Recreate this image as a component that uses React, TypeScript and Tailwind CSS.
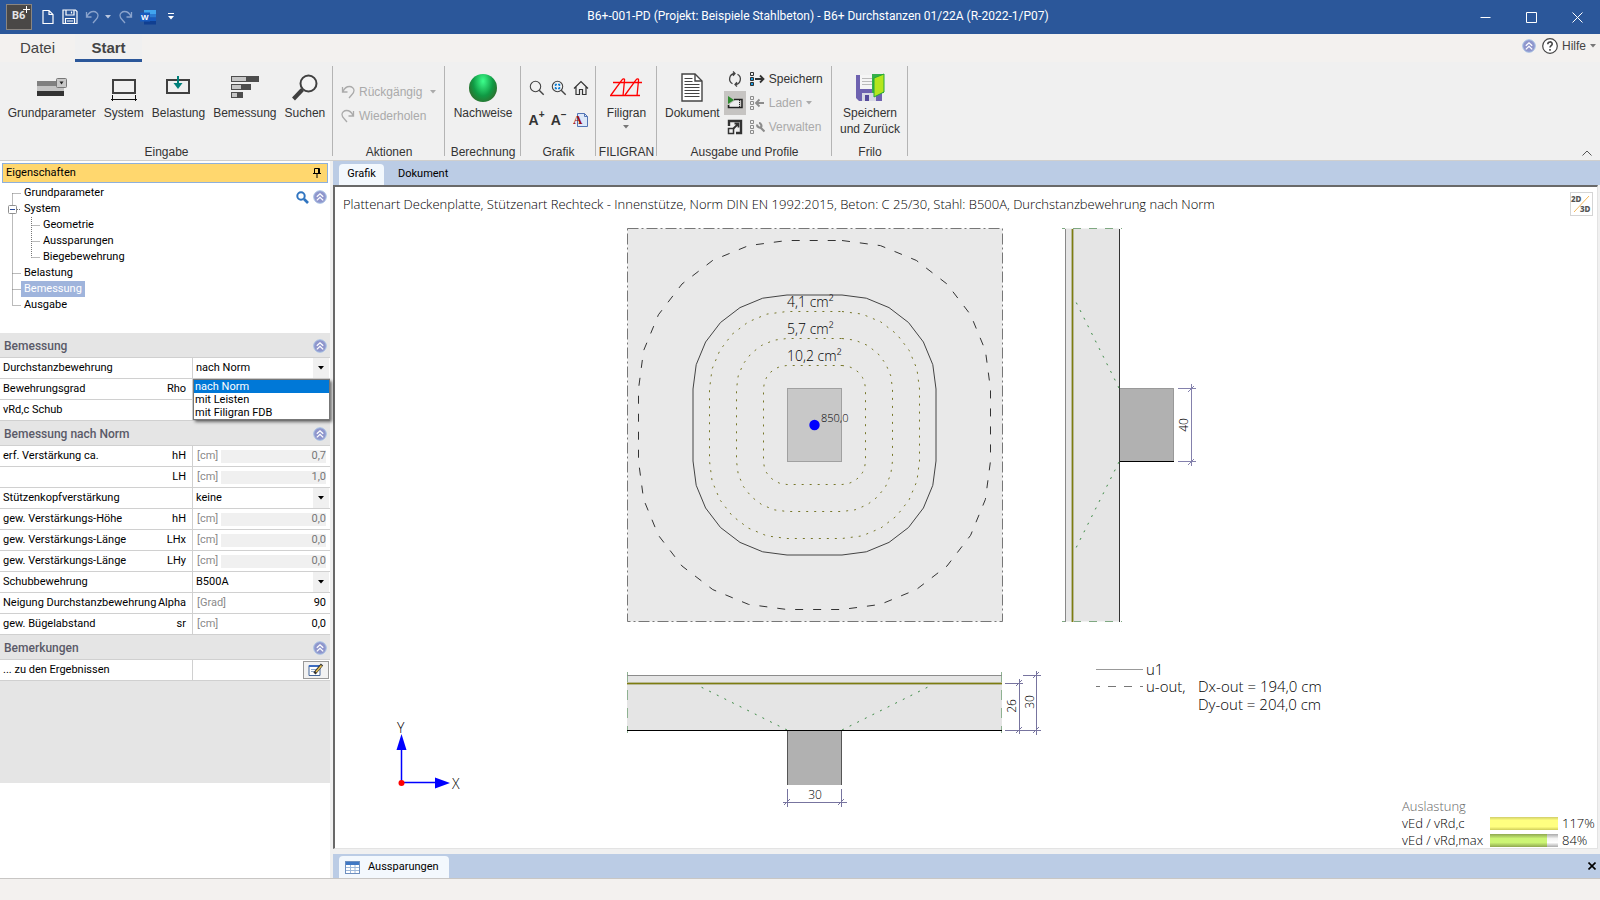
import { useState } from 'react';
import type { ReactNode } from 'react';

type PropertyRow = {
  id: string;
  label: string;
  symbol?: string;
  unit?: string;
  value?: string;
  options?: string[];
  locked?: boolean;
};

const normRows: PropertyRow[] = [
  { id: 'hh-erf', label: 'erf. Verstärkung ca.', symbol: 'hH', unit: '[cm]', value: '0,7', locked: true },
  { id: 'lh-erf', label: '', symbol: 'LH', unit: '[cm]', value: '1,0', locked: true },
  { id: 'kopf', label: 'Stützenkopfverstärkung', value: 'keine', options: ['keine'] },
  { id: 'hh', label: 'gew. Verstärkungs-Höhe', symbol: 'hH', unit: '[cm]', value: '0,0', locked: true },
  { id: 'lhx', label: 'gew. Verstärkungs-Länge', symbol: 'LHx', unit: '[cm]', value: '0,0', locked: true },
  { id: 'lhy', label: 'gew. Verstärkungs-Länge', symbol: 'LHy', unit: '[cm]', value: '0,0', locked: true },
  { id: 'schub', label: 'Schubbewehrung', value: 'B500A', options: ['B500A'] },
  { id: 'alpha', label: 'Neigung Durchstanzbewehrung', symbol: 'Alpha', unit: '[Grad]', value: '90' },
  { id: 'sr', label: 'gew. Bügelabstand', symbol: 'sr', unit: '[cm]', value: '0,0' },
];

const reinforcementOptions = ['nach Norm', 'mit Leisten', 'mit Filigran FDB'];

const treeItems = [
  { name: 'Grundparameter', level: 0 },
  { name: 'System', level: 0 },
  { name: 'Geometrie', level: 1 },
  { name: 'Aussparungen', level: 1 },
  { name: 'Biegebewehrung', level: 1 },
  { name: 'Belastung', level: 0 },
  { name: 'Bemessung', level: 0 },
  { name: 'Ausgabe', level: 0 },
];

/* ---------- Icons ---------- */

function RoundChevron() {
  return (
    <svg width="14" height="14" viewBox="0 0 14 14" fill="none">
      <circle cx="7" cy="7" r="6.3" fill="#8f96cc" stroke="#a9c3e6" strokeWidth="1" />
      <path d="M3.8 6.8 7 3.8l3.2 3M3.8 10.4 7 7.4l3.2 3" stroke="#fff" strokeWidth="1.3" />
    </svg>
  );
}

function Caret({ className = 'text-[#777]' }: { className?: string }) {
  return (
    <svg width="6" height="4" viewBox="0 0 6 4" className={className}>
      <path d="M0 0h6L3 3.5z" fill="currentColor" />
    </svg>
  );
}

function UndoIcon({ flip = false }: { flip?: boolean }) {
  return (
    <svg width="14" height="14" viewBox="0 0 14 14" fill="none" stroke="currentColor" strokeWidth="1.3">
      {flip ? (
        <path d="M12.5 2v5h-5M12 6.5C10.5 3 8 1.500 5.500 1.500 3 1.500 1 3.500 1 5.500c0 2 1 3 2 4L6 13" />
      ) : (
        <path d="M1.500 2v5h5M2 6.500C3.500 3 6 1.500 8.500 1.500c2.500 0 4.500 2 4.500 4 0 2-1 3-2 4L8 13" />
      )}
    </svg>
  );
}

function ParameterIcon() {
  return (
    <svg width="32" height="28" viewBox="0 0 32 28">
      <rect x="1" y="7" width="20" height="5" fill="#808080" />
      <rect x="1" y="12" width="27" height="5" fill="#c3c3c3" />
      <rect x="1" y="17" width="27" height="5" fill="#333" />
      <rect x="20.500" y="4.500" width="10" height="9" rx="1" fill="#c8c8c8" stroke="#777" />
      <path d="M23.500 7.500h4l-2 3z" fill="#222" />
    </svg>
  );
}

function SystemIcon() {
  return (
    <svg width="30" height="28" viewBox="0 0 30 28" fill="none" stroke="#404040">
      <rect x="4" y="6" width="22" height="13" strokeWidth="2" />
      <path d="M2 25.500h26M3.500 21v6M26.500 21v6" stroke="#111" strokeWidth="1" />
    </svg>
  );
}

function LoadIcon() {
  return (
    <svg width="28" height="28" viewBox="0 0 28 28" fill="none">
      <rect x="3" y="6" width="22" height="13" stroke="#404040" strokeWidth="2" />
      <path d="M14 2v8" stroke="#00807a" strokeWidth="2" />
      <path d="M9.500 9h9L14 15z" fill="#00807a" />
    </svg>
  );
}

function DesignIcon() {
  return (
    <svg width="30" height="28" viewBox="0 0 30 28">
      <path d="M1 2h28v6H1zM1 10h20v6H1zM1 18h12v6H1z" fill="#4d4d4d" />
      <path d="M2 3h14v4H2zM2 11h9v4H2zM2 19h5v4H2z" fill="#c6c6c6" />
    </svg>
  );
}

function MagnifierIcon() {
  return (
    <svg width="28" height="28" viewBox="0 0 28 28" fill="none" stroke="#404040">
      <circle cx="17.500" cy="9.500" r="8" strokeWidth="2" fill="#f4f4f4" />
      <path d="M11.500 15.500 2.500 25" strokeWidth="4" />
    </svg>
  );
}

function ZoomIcon({ windowed = false }: { windowed?: boolean }) {
  return (
    <svg width="16" height="16" viewBox="0 0 16 16" fill="none" stroke="#444">
      <circle cx="6.500" cy="6.500" r="5.200" strokeWidth="1.100" />
      <path d="m10.200 10.200 4.500 4.500" strokeWidth="1.400" />
      {windowed && <path d="M4.500 6V4.500H6M7 4.500h1.500V6M8.500 7v1.500H7M6 8.500H4.500V7" stroke="#1382d8" strokeWidth="1.400" />}
    </svg>
  );
}

function HomeIcon() {
  return (
    <svg width="16" height="16" viewBox="0 0 16 16" fill="none" stroke="#333" strokeWidth="1.200">
      <path d="M1 8.500 8 1.500l7 7M3 7v7.500h3.500V9.500h3v5H13V7" />
    </svg>
  );
}

function FontPageIcon() {
  return (
    <svg width="16" height="16" viewBox="0 0 16 16">
      <path d="M4.500 1.500h7l3 3v10h-10z" fill="#dce8f8" stroke="#5274b5" />
      <path d="M11.500 1.500v3h3" fill="none" stroke="#5274b5" />
      <text x="0" y="12" fontFamily="Liberation Serif" fontSize="13" fontWeight="700" fill="#9c0d0d">A</text>
    </svg>
  );
}

function TrussIcon() {
  return (
    <svg width="32" height="22" viewBox="0 0 32 22" fill="none" stroke="#f00" strokeWidth="1.300">
      <path d="M3 5.500h29M0 18.500h30" />
      <path d="M1 18 12 3c1-1.500 3-1.500 2.500.500L13 19M15 18 26 3c1-1.500 3-1.500 2.500.500L27 19" />
    </svg>
  );
}

function DocumentIcon() {
  return (
    <svg width="22" height="30" viewBox="0 0 22 30" fill="none" stroke="#444">
      <path d="M1 1h13l7 7v20H1z" fill="#fff" strokeWidth="1.400" />
      <path d="M14 1v7h7" strokeWidth="1.400" />
      <path d="M3.500 5.500h8M3.500 8.500h8M3.500 11.500h15M3.500 14.500h15M3.500 17.500h15M3.500 20.500h15M3.500 23.500h15" />
    </svg>
  );
}

function RefreshIcon() {
  return (
    <svg width="16" height="16" viewBox="0 0 16 16" fill="none" stroke="#444" strokeWidth="1.300">
      <path d="M5.500 12.800A5.500 5.500 0 0 1 7.500 2.500M10.500 3.200A5.500 5.500 0 0 1 8.500 13.500M6 .5l2 2-2 2.300M10 11.200l-2 2.300 2 2" />
    </svg>
  );
}

function PreviewIcon() {
  return (
    <svg width="16" height="16" viewBox="0 0 16 16">
      <path d="M7 4.500h8v8H1.500V10" fill="none" stroke="#222" strokeWidth="1.500" />
      <path d="M8 5.500h4v6H3V9z" fill="#eee" />
      <path d="M12.500 5v7" stroke="#222" strokeDasharray="1 1" />
      <path d="M1 1v8l6-4z" fill="#2e8b2e" />
    </svg>
  );
}

function ExpandIcon() {
  return (
    <svg width="16" height="16" viewBox="0 0 16 16" fill="none" stroke="#333">
      <path d="M2 7V2h12v12H9" strokeWidth="2.400" />
      <path d="M1.500 9.500h5v5h-5z" strokeWidth="1.500" />
      <path d="m6.500 9.500 5-5M7.500 4.500h4v4" strokeWidth="1.800" />
    </svg>
  );
}

function ProfileIcon({ kind }: { kind: 'save' | 'load' | 'manage' }) {
  const tint = kind === 'save' ? '#333' : '#8c8c8c';
  return (
    <svg width="15" height="16" viewBox="0 0 15 16" fill="none" stroke={tint}>
      <path d="M.5 1.500h3v3h-3z" />
      <path d="M.5 6.500h3v3h-3zM.5 11.500h3v3h-3z" fill={kind === 'save' ? '#1c9be0' : 'none'} />
      {kind === 'save' && <path d="M5 8h8M10 4.500 13.500 8 10 11.500" strokeWidth="1.800" />}
      {kind === 'load' && <path d="M6 8h8M9.500 4.500 6 8l3.500 3.500" strokeWidth="1.800" />}
      {kind === 'manage' && <path d="M7 5.500c0 3 3 3.500 4 2.500s0-4-2-4M10.500 8.500l4 4" strokeWidth="2.200" />}
    </svg>
  );
}

function SaveExitIcon() {
  return (
    <svg width="30" height="30" viewBox="0 0 30 30">
      <path d="M1 2h26v26H4l-3-3z" fill="#6e62b0" />
      <path d="M5 2h16v14H5z" fill="#f5f5f5" />
      <path d="M7 5.500h10M7 8.500h10M7 11.500h10" stroke="#bbb" />
      <path d="M7 20h14v8H7z" fill="#d8d8e4" />
      <path d="M10 22h4v6h-4z" fill="#55499a" />
      <path d="M17 1h12v19H17z" fill="#35b04a" />
      <path d="M19 5 29 1v18l-10 5z" fill="#b5e61d" stroke="#22a83a" />
    </svg>
  );
}

/* ---------- Ribbon ---------- */

function RibbonGroup({ title, width, children }: { title: string; width: string; children: ReactNode }) {
  return (
    <section className={`relative flex shrink-0 flex-col items-center justify-between pt-[5px] ${width}`}>
      <div className="flex w-full justify-center">{children}</div>
      <h2 className="whitespace-nowrap leading-4">{title}</h2>
      <span className="absolute top-1 right-0 bottom-1 w-px bg-[#b4b4b4]" />
    </section>
  );
}

function BigButton({ icon, children }: { icon: ReactNode; children: ReactNode }) {
  return (
    <button className="flex flex-col items-center leading-4 whitespace-nowrap">
      <span className="flex h-[38px] items-center pt-1">{icon}</span>
      {children}
    </button>
  );
}

function Ribbon() {
  return (
    <div className="flex h-[99px] border-b border-[#d0cfcd] bg-[#f0f0f0] text-[12px] text-[#333]">
      <RibbonGroup title="Eingabe" width="w-[333px]">
        <div className="flex gap-2">
          <BigButton icon={<ParameterIcon />}>Grundparameter</BigButton>
          <BigButton icon={<SystemIcon />}>System</BigButton>
          <BigButton icon={<LoadIcon />}>Belastung</BigButton>
          <BigButton icon={<DesignIcon />}>Bemessung</BigButton>
          <BigButton icon={<MagnifierIcon />}>Suchen</BigButton>
        </div>
      </RibbonGroup>
      <RibbonGroup title="Aktionen" width="w-[112px]">
        <div className="flex w-full flex-col gap-2 pt-[17px] pl-2 text-[#aaa]">
          <button disabled className="flex items-center gap-1 leading-4">
            <UndoIcon />
            <span>Rückgängig</span>
            <span className="pl-1"><Caret className="text-[#aaa]" /></span>
          </button>
          <button disabled className="flex items-center gap-1 leading-4">
            <UndoIcon flip />
            <span>Wiederholen</span>
          </button>
        </div>
      </RibbonGroup>
      <RibbonGroup title="Berechnung" width="w-[76px]">
        <BigButton
          icon={<span className="size-7 rounded-full bg-radial-[at_50%_25%] from-[#3dff8c] via-[#109a44] to-[#45501f]" />}
        >
          Nachweise
        </BigButton>
      </RibbonGroup>
      <RibbonGroup title="Grafik" width="w-[75px]">
        <div className="grid grid-cols-3 gap-x-[6px] gap-y-4 pt-[13px]">
          <button aria-label="Zoom"><ZoomIcon /></button>
          <button aria-label="Zoom Fenster"><ZoomIcon windowed /></button>
          <button aria-label="Gesamtansicht"><HomeIcon /></button>
          <button className="flex size-4 items-center justify-center text-[14px] font-bold">A<sup className="text-[10px]">+</sup></button>
          <button className="flex size-4 items-center justify-center text-[14px] font-bold">A<sup className="text-[10px]">–</sup></button>
          <button aria-label="Schriftart"><FontPageIcon /></button>
        </div>
      </RibbonGroup>
      <RibbonGroup title="FILIGRAN" width="w-[61px]">
        <div className="flex flex-col items-center gap-1">
          <BigButton icon={<TrussIcon />}>Filigran</BigButton>
          <Caret />
        </div>
      </RibbonGroup>
      <RibbonGroup title="Ausgabe und Profile" width="w-[175px]">
        <div className="flex w-full gap-1 pl-2">
          <BigButton icon={<DocumentIcon />}>Dokument</BigButton>
          <div className="grid grid-cols-[22px_auto] items-center gap-x-1">
            <button aria-label="Aktualisieren" className="flex h-6 items-center justify-center"><RefreshIcon /></button>
            <button className="flex items-center gap-1"><ProfileIcon kind="save" />Speichern</button>
            <button aria-label="Vorschau" className="flex h-6 items-center justify-center bg-[#c6c4c2]"><PreviewIcon /></button>
            <button disabled className="flex items-center gap-1 text-[#aaa]">
              <ProfileIcon kind="load" />Laden<Caret className="text-[#aaa]" />
            </button>
            <button aria-label="Vergrößern" className="flex h-6 items-center justify-center"><ExpandIcon /></button>
            <button disabled className="flex items-center gap-1 text-[#aaa]"><ProfileIcon kind="manage" />Verwalten</button>
          </div>
        </div>
      </RibbonGroup>
      <RibbonGroup title="Frilo" width="w-[76px]">
        <BigButton icon={<SaveExitIcon />}>
          <span>Speichern<br />und Zurück</span>
        </BigButton>
      </RibbonGroup>
      <div className="flex flex-1 items-end justify-end p-2 pb-1">
        <button aria-label="Menüband reduzieren">
          <svg width="10" height="6" viewBox="0 0 10 6" fill="none" stroke="#555">
            <path d="M.5 5.500 5 1l4.500 4.500" />
          </svg>
        </button>
      </div>
    </div>
  );
}

/* ---------- Title bar ---------- */

function TitleBar() {
  return (
    <header className="relative flex h-[34px] items-center justify-between bg-[#2b579a] text-white">
      <div className="flex items-center pb-px pl-[6px]">
        <span className="relative flex size-[26px] items-center border border-[#8a8580] bg-[#4a4846] pl-[5px] font-['Roboto'] text-[11px] font-bold text-[#e6e6e6]">
          B6
          <svg width="7" height="7" viewBox="0 0 7 7" className="absolute top-px right-px">
            <path d="M3.500 0v7M0 3.500h7" stroke="#fff" />
          </svg>
        </span>
        <button aria-label="Neu" className="ml-[10px]">
          <svg width="12" height="16" viewBox="0 0 12 16" fill="none" stroke="#fff" strokeWidth="1.200">
            <path d="M1 1.500h6l4 4v9H1zM7 1.500v4h4" />
          </svg>
        </button>
        <button aria-label="Speichern" className="ml-2">
          <svg width="16" height="16" viewBox="0 0 16 16" fill="none" stroke="#fff" strokeWidth="1.200">
            <path d="M1 1h12.500l1.500 1.500V14.500H1zM4 1v5h8V1M3.500 14.500v-5h9v5M5 12h6M9.500 2.500v2" />
          </svg>
        </button>
        <button aria-label="Rückgängig" className="ml-[7px] text-[#8aa3cc]"><UndoIcon /></button>
        <span className="ml-[6px]"><Caret className="text-[#b9c6de]" /></span>
        <button aria-label="Wiederholen" className="ml-2 text-[#8aa3cc]"><UndoIcon flip /></button>
        <button aria-label="Word" className="ml-[7px]">
          <svg width="16" height="16" viewBox="0 0 16 16">
            <path d="M4 1h12v4H4z" fill="#41a5ee" />
            <path d="M4 5h12v3.500H4z" fill="#2b7cd3" />
            <path d="M4 8.500h12V12H4z" fill="#185abd" />
            <path d="M4 12h12v3.500H4z" fill="#103f91" />
            <path d="M0 3.500h10v9H0z" fill="#185abd" />
            <text x="1" y="11" fontFamily="Liberation Sans" fontSize="8" fontWeight="700" fill="#fff">W</text>
          </svg>
        </button>
        <button aria-label="Schnellzugriff anpassen" className="ml-3">
          <svg width="6" height="7" viewBox="0 0 6 7" fill="#fff"><path d="M0 0h6v1H0zM0 3h6L3 6.500z" /></svg>
        </button>
      </div>
      <h1 className="absolute left-1/2 ml-[18px] -translate-x-1/2 pb-[2px] font-['Roboto'] text-[12px] whitespace-nowrap">
        B6+-001-PD (Projekt: Beispiele Stahlbeton) - B6+ Durchstanzen 01/22A (R-2022-1/P07)
      </h1>
      <div className="flex h-full">
        <button aria-label="Minimieren" className="flex w-[46px] items-center justify-center">
          <svg width="11" height="11" viewBox="0 0 11 11" fill="none" stroke="#fff"><path d="M.5 5.500h10" /></svg>
        </button>
        <button aria-label="Maximieren" className="flex w-[46px] items-center justify-center">
          <svg width="11" height="11" viewBox="0 0 11 11" fill="none" stroke="#fff"><path d="M.5.5h10v10H.5z" /></svg>
        </button>
        <button aria-label="Schließen" className="flex w-[46px] items-center justify-center">
          <svg width="11" height="11" viewBox="0 0 11 11" fill="none" stroke="#fff"><path d="m.5.5 10 10M10.500.5l-10 10" /></svg>
        </button>
      </div>
    </header>
  );
}

/* ---------- Sidebar ---------- */

function SectionHeader({ title }: { title: string }) {
  return (
    <div className="flex h-[25px] items-center justify-between border-b border-[#d0d0d0] bg-[#e5e5e5] pt-px pr-[3px] pl-1">
      <h3 className="text-[12px] font-medium text-[#5a5a68]">{title}</h3>
      <button aria-label={`${title} einklappen`}><RoundChevron /></button>
    </div>
  );
}

function Row({ row, children }: { row: PropertyRow; children?: ReactNode }) {
  return (
    <div className="relative flex h-[21px] border-b border-[#d0d0d0] bg-white">
      <label htmlFor={row.id} className="flex w-[193px] items-center justify-between border-r border-[#d0d0d0] pr-[6px] pl-[3px] whitespace-nowrap">
        <span>{row.label}</span>
        <span>{row.symbol}</span>
      </label>
      <div className="flex min-w-0 flex-1 items-center">
        {children}
        {row.options && (
          <span className="relative flex h-full w-full items-center">
            <select id={row.id} className="h-full w-full appearance-none bg-transparent pt-px pl-[3px] outline-none">
              {row.options.map((o) => <option key={o}>{o}</option>)}
            </select>
            <span className="pointer-events-none absolute top-0 right-px bottom-0 flex w-4 items-center justify-center bg-[#f0f0f0]">
              <Caret className="text-black" />
            </span>
          </span>
        )}
        {row.unit && (
          <>
            <span className="w-7 shrink-0 pl-1 text-[#8a8a8a]">{row.unit}</span>
            <input
              id={row.id}
              aria-label={row.label || row.symbol}
              defaultValue={row.value}
              readOnly={row.locked}
              className={`mr-1 h-[13px] min-w-0 flex-1 text-right outline-none ${row.locked ? 'bg-[#f0f0f0] text-[#777]' : 'bg-transparent text-black'}`}
            />
          </>
        )}
      </div>
    </div>
  );
}

function Sidebar() {
  const [active, setActive] = useState('Bemessung');
  const [choice, setChoice] = useState('nach Norm');

  return (
    <aside className="flex w-[330px] shrink-0 flex-col bg-white pt-[2px] font-['Roboto'] text-[11px] text-black">
      <div className="mx-[2px] flex h-5 items-center justify-between border border-[#8eb0dc] bg-[#ffd76e] pr-[6px] pl-[3px]">
        <h2>Eigenschaften</h2>
        <button aria-label="Anheften">
          <svg width="8" height="10" viewBox="0 0 8 10" fill="none" stroke="#000">
            <path d="M1.500.5h5v5h-5zM5.500 0v6M0 5.500h8M4 6v4" />
          </svg>
        </button>
      </div>

      <nav className="relative pt-[2px] pb-5">
        <svg width="42" height="128" viewBox="0 0 42 128" fill="none" className="absolute top-[2px] left-0">
          <path
            d="M12.500 8.500V120.500M12.500 8.500H21M17 24.500H21M31.500 32V72.500M31.500 40.500H40M31.500 56.500H40M31.500 72.500H40M12.500 88.500H21M12.500 104.500H21M12.500 120.500H21"
            stroke="#777"
            strokeDasharray="1 1"
          />
          <rect x="8.500" y="20.500" width="8" height="8" rx="1" fill="#fff" stroke="#8f8f8f" />
          <path d="M10 24.500h5" stroke="#2a4a9a" />
        </svg>
        <ul>
          {treeItems.map((item) => (
            <li key={item.name} className={`flex h-4 ${item.level === 1 ? 'pl-10' : 'pl-[21px]'}`}>
              <button
                onClick={() => setActive(item.name)}
                className={`px-[3px] leading-4 ${active === item.name ? 'bg-[#9fb4dc] text-white' : ''}`}
              >
                {item.name}
              </button>
            </li>
          ))}
        </ul>
        <div className="absolute top-[7px] right-[3px] flex items-center gap-1">
          <button aria-label="Suchen">
            <svg width="13" height="13" viewBox="0 0 13 13" fill="none" stroke="#2f74c0">
              <circle cx="5" cy="5" r="3.700" strokeWidth="2" />
              <path d="m8 8 4 4" strokeWidth="2.600" />
            </svg>
          </button>
          <button aria-label="Alle einklappen"><RoundChevron /></button>
        </div>
      </nav>

      <div className="bg-[#e5e5e5] pb-[102px]">
        <SectionHeader title="Bemessung" />
        <Row row={{ id: 'bewehrung', label: 'Durchstanzbewehrung', options: [choice] }}>
          <ul
            role="listbox"
            aria-label="Durchstanzbewehrung"
            className="absolute top-[21px] right-0 left-[193px] z-10 border border-[#777] bg-white shadow-[2px_2px_3px_#00000088]"
          >
            {reinforcementOptions.map((option) => (
              <li
                key={option}
                role="option"
                aria-selected={choice === option}
                onClick={() => setChoice(option)}
                className={`pl-px leading-[13px] ${choice === option ? 'bg-[#0078d7] text-white' : ''}`}
              >
                {option}
              </li>
            ))}
          </ul>
        </Row>
        <Row row={{ id: 'rho', label: 'Bewehrungsgrad', symbol: 'Rho' }} />
        <Row row={{ id: 'vrdc', label: 'vRd,c Schub' }} />
        <SectionHeader title="Bemessung nach Norm" />
        {normRows.map((row) => <Row key={row.id} row={row} />)}
        <SectionHeader title="Bemerkungen" />
        <Row row={{ id: 'notes', label: '... zu den Ergebnissen' }}>
          <button id="notes" aria-label="Bearbeiten" className="mr-px ml-auto flex h-[18px] w-[26px] items-center justify-center border border-[#999] bg-[#f2f2f2]">
            <svg width="16" height="14" viewBox="0 0 16 14" fill="none">
              <path d="M1 2.500h11v10H1z" fill="#fff" stroke="#44669a" />
              <path d="M1 2h11v2H1z" fill="#3c6cc0" />
              <path d="M3 6.500h5M3 8.500h4" stroke="#8fa6c8" />
              <path d="M6.500 10.500 14 1.500" stroke="#333" strokeWidth="3" />
              <path d="M8 9 13.500 2.500" stroke="#e8c050" strokeWidth="1.500" />
            </svg>
          </button>
        </Row>
      </div>
    </aside>
  );
}

/* ---------- Drawing ---------- */

const column = { left: 787, right: 842, top: 389, bottom: 461 };

// Perimeter around the column: straight sides, corners split into 15° steps.
function perimeter(radius: number) {
  const corners = [
    { x: column.right, y: column.top, start: -90 },
    { x: column.right, y: column.bottom, start: 0 },
    { x: column.left, y: column.bottom, start: 90 },
    { x: column.left, y: column.top, start: 180 },
  ];
  return corners
    .flatMap((corner) =>
      Array.from({ length: 7 }, (_, i) => {
        const angle = ((corner.start + i * 15) * Math.PI) / 180;
        return `${(corner.x + radius * Math.cos(angle)).toFixed(1)},${(corner.y + radius * Math.sin(angle)).toFixed(1)}`;
      }),
    )
    .join(' ');
}

function Drawing() {
  return (
    <svg className="absolute inset-0 size-full font-['Open_Sans'] font-light" fill="none">
      <g transform="translate(-335 -187)">
        {/* Plan */}
        <rect x="627.500" y="228.500" width="375" height="393" fill="#e9e9e9" stroke="#777" strokeDasharray="11 3 2 3" />
        <polygon points={perimeter(148.5)} stroke="#333" strokeDasharray="8 10" />
        <polygon points={perimeter(94)} stroke="#444" />
        <polygon points={perimeter(77.5)} stroke="#77772a" strokeDasharray="2 6" />
        <polygon points={perimeter(50.5)} stroke="#77772a" strokeDasharray="2 6" />
        <polygon points={perimeter(23.5)} stroke="#77772a" strokeDasharray="2 6" />
        <rect x="787.500" y="388.500" width="54" height="73" fill="#c8c8c8" stroke="#a0a0a0" />
        <circle cx="814.500" cy="425" r="5.200" fill="#00f" />
        <g fill="#000" fontSize="14">
          <text x="787" y="307">4,1 cm²</text>
          <text x="787" y="334">5,7 cm²</text>
          <text x="787" y="361">10,2 cm²</text>
        </g>
        <text x="821" y="422" fontSize="11" fill="#000">850,0</text>

        {/* Side section */}
        <rect x="1065" y="228.500" width="54" height="393" fill="#e5e5e5" />
        <path d="M1062 228.500h60M1062 621.500h60" stroke="#7fa882" strokeDasharray="8 8" strokeDashoffset="5" />
        <path d="M1065.500 229v393" stroke="#888" />
        <path d="M1072.500 229v393" stroke="#b9b996" strokeWidth="3" />
        <path d="M1072.500 229v393" stroke="#7d7d10" />
        <path d="M1119.500 229v393" stroke="#333" />
        <path d="M1119 388 1075 300M1119 462l-44 88" stroke="#3d8a45" strokeDasharray="2 6.500" />
        <rect x="1120" y="388" width="54" height="73" fill="#b1b1b1" />
        <path d="M1120 388.500h53.500V461" stroke="#999" />
        <path d="M1120 461.500h54" stroke="#000" />
        <g stroke="#8481ac">
          <path d="M1178 388.500h18M1178 461.500h18M1191.500 384v82M1188 392l6-6M1188 465l6-6" />
        </g>
        <text transform="translate(1188 425) rotate(-90)" textAnchor="middle" fontSize="12" fill="#000">40</text>

        {/* Front section */}
        <rect x="627" y="675" width="375" height="55" fill="#e5e5e5" />
        <path d="M627.500 672v61M1001.500 672v61" stroke="#8fb292" strokeDasharray="10 8" />
        <path d="M627 675.500h375" stroke="#8c8c8c" />
        <path d="M627 683.500h375" stroke="#b9b996" strokeWidth="3" />
        <path d="M627 683.500h375" stroke="#7d7d10" />
        <path d="M787 730 699 686M842 730l90-45" stroke="#3d8a45" strokeDasharray="2 6.500" />
        <rect x="787.500" y="731" width="54" height="54" fill="#b1b1b1" />
        <path d="M787.500 731v54M841.500 731v54" stroke="#555" />
        <path d="M627 730.500h375" stroke="#000" />
        <g stroke="#77749f">
          <path d="M787.500 789v18M841.500 789v18M783 802.500h64M784 805l6-6M838 805l6-6" />
          <path d="M1005 683.500h18M1023 675.500h18M1005 730.500h36M1019.500 679v55M1036.500 671v64" />
          <path d="m1016 686 6-6M1016 733l6-6M1033 678l6-6M1033 733l6-6" />
        </g>
        <g fontSize="12" fill="#000" textAnchor="middle">
          <text x="815" y="799">30</text>
          <text transform="translate(1016 706) rotate(-90)">26</text>
          <text transform="translate(1034 702) rotate(-90)">30</text>
        </g>

        {/* Axes */}
        <path d="M401.500 783V748M401 782.500h34" stroke="#00f" strokeWidth="1.500" />
        <path d="m401.500 734 5 16h-10zM450 783l-15-5.500v11z" fill="#00f" />
        <circle cx="401.500" cy="783" r="3" fill="#f00" />
        <g fontSize="14" fill="#000">
          <text x="397" y="733">Y</text>
          <text x="452" y="789">X</text>
        </g>

        {/* Legend */}
        <path d="M1096 669.500h47" stroke="#999" />
        <path d="M1096 686.500h47" stroke="#777" strokeDasharray="8 8" strokeDashoffset="4" />
        <g fontSize="15" fill="#000">
          <text x="1146" y="675">u1</text>
          <text x="1146" y="692">u-out,</text>
          <text x="1198" y="692">Dx-out = 194,0 cm</text>
          <text x="1198" y="710">Dy-out = 204,0 cm</text>
        </g>
      </g>
    </svg>
  );
}

function Canvas() {
  return (
    <div className="relative mr-[2px] flex min-h-[660px] flex-1 flex-col justify-between border-t-2 border-r border-b border-l-2 border-t-[#696969] border-r-[#e3e3e3] border-b-[#e3e3e3] border-l-[#696969] bg-white font-['Open_Sans'] text-[13px] font-light">
      <Drawing />
      <div className="relative flex items-start justify-between pt-1 pr-1 pl-2">
        <p className="leading-[26px] text-black">
          Plattenart Deckenplatte, Stützenart Rechteck - Innenstütze, Norm DIN EN 1992:2015, Beton: C 25/30, Stahl: B500A, Durchstanzbewehrung nach Norm
        </p>
        <button aria-label="2D/3D umschalten" className="mt-px">
          <svg width="23" height="24" viewBox="0 0 23 24" fill="none">
            <rect x=".5" y=".5" width="22" height="23" fill="#fff" stroke="#d5d5d5" />
            <path d="m4 20 15-16" stroke="#f5b95a" />
            <g fontFamily="Noto Sans" fontSize="8" fontWeight="800" fill="#555">
              <text x="1" y="10">2D</text>
              <text x="10" y="20">3D</text>
            </g>
          </svg>
        </button>
      </div>
      <div className="relative grid grid-cols-[84px_68px_35px] items-center gap-x-1 gap-y-[2px] self-end leading-[15px] text-black">
        <span className="col-span-3 text-[#666]">Auslastung</span>
        <span className="whitespace-nowrap">vEd / vRd,c</span>
        <span className="h-[13px] bg-[linear-gradient(#d0cd6a,#ffff80_25%,#ffff80_75%,#d0cd5a)]" />
        <span>117%</span>
        <span className="whitespace-nowrap">vEd / vRd,max</span>
        <span className="flex h-[13px] bg-[linear-gradient(#aaa,#f4f4f4_35%,#fff_65%,#aaa)]">
          <span className="w-[84%] bg-[linear-gradient(#8fa850,#ccf575_35%,#ccf575_65%,#8fa850)]" />
        </span>
        <span>84%</span>
      </div>
    </div>
  );
}

export default function App() {
  return (
    <div className="flex min-h-screen flex-col bg-[#f0f0f0] font-['Liberation_Sans',sans-serif]">
      <TitleBar />
      <div className="flex h-7 items-center justify-between bg-[#f3f1ef] text-[15px] text-[#444]">
        <nav className="flex h-full">
          <button className="w-[75px]">Datei</button>
          <button className="w-[67px] border-b-[3px] border-[#2b579a] bg-[#f0f0f0] pt-[3px] font-bold">Start</button>
        </nav>
        <div className="flex items-center gap-[6px] pr-1 pb-1 text-[12px]">
          <RoundChevron />
          <button className="flex items-center gap-1">
            <svg width="16" height="16" viewBox="0 0 16 16" fill="none" stroke="#444">
              <circle cx="8" cy="8" r="7.300" fill="#fff" strokeWidth="1.200" />
              <path d="M5.800 6.200c0-3 4.400-3 4.400-.2 0 1.700-2.200 1.700-2.200 3.600M8 11v1.700" strokeWidth="1.600" />
            </svg>
            Hilfe
            <Caret />
          </button>
        </div>
      </div>
      <Ribbon />

      <div className="flex flex-1">
        <Sidebar />
        <main className="ml-[3px] flex min-w-0 flex-1 flex-col">
          <nav className="flex h-6 items-end bg-[#bbcce5] pl-[6px] font-['Roboto'] text-[11px]">
            <button className="h-[21px] w-[45px] rounded-t bg-[#f3f8fd]">Grafik</button>
            <button className="h-[21px] px-[14px]">Dokument</button>
          </nav>
          <Canvas />
          <nav className="mt-[5px] flex h-6 items-end justify-between bg-[#bbcce5] pr-1 pl-[6px] font-['Roboto'] text-[11px]">
            <button className="flex h-[22px] w-[110px] items-center gap-2 rounded-t bg-[#f3f8fd] pl-[6px]">
              <svg width="15" height="13" viewBox="0 0 15 13" fill="none">
                <rect x=".5" y=".5" width="14" height="12" fill="#fff" stroke="#6d8fbf" />
                <path d="M1 1h13v3H1z" fill="#3f78c4" />
                <path d="M1 6.500h13M1 9.500h13M5.500 4v8M10 4v8" stroke="#9db8da" />
              </svg>
              Aussparungen
            </button>
            <button aria-label="Schließen" className="mb-2">
              <svg width="8" height="8" viewBox="0 0 8 8" stroke="#000" strokeWidth="1.600"><path d="m.5.5 7 7M7.500.5l-7 7" /></svg>
            </button>
          </nav>
        </main>
      </div>
      <footer className="h-[22px] border-t border-[#c8c6c4] bg-[#f3f1ef]" />
    </div>
  );
}
